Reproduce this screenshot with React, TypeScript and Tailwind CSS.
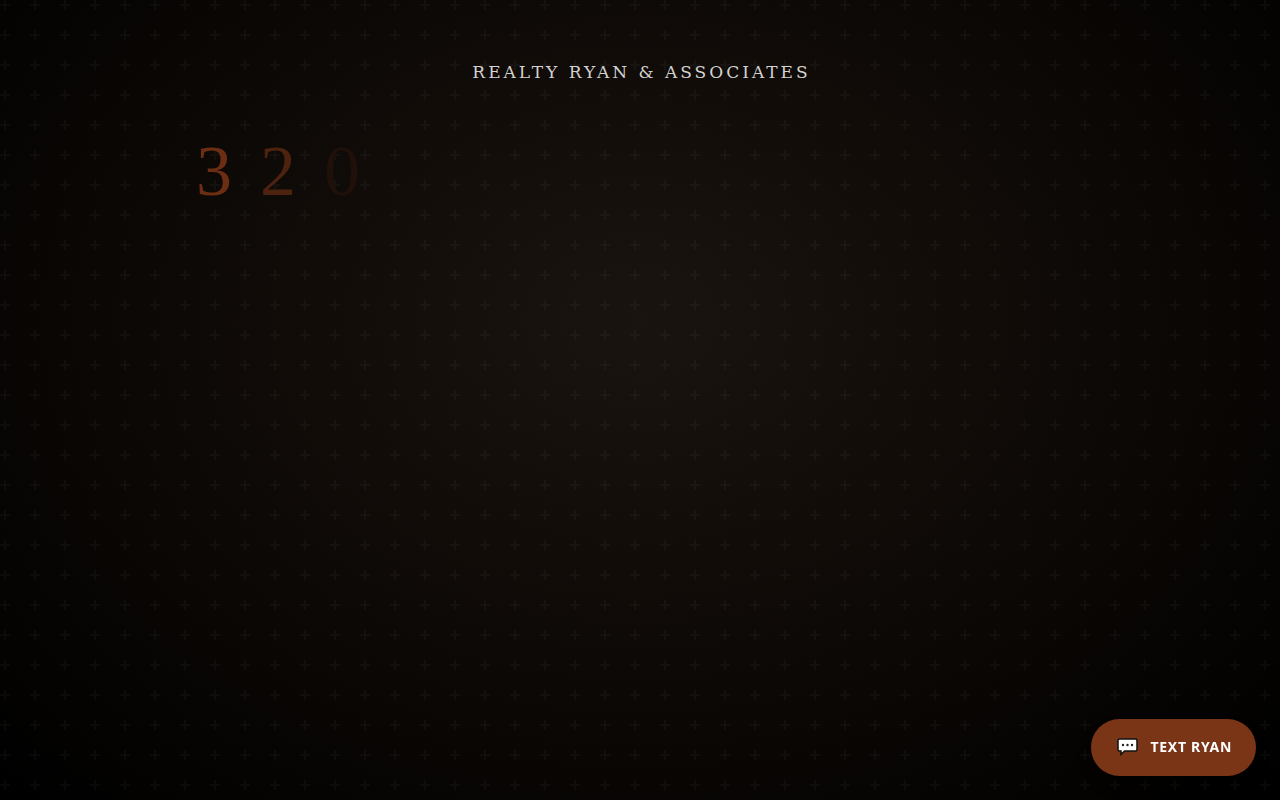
const digits = [
  { value: "3", className: "text-[#6c2e13]" },
  { value: "2", className: "text-[#4d220f]" },
  { value: "0", className: "text-[#1f100a]" },
];

function CrossPattern() {
  return (
    <svg className="pointer-events-none absolute inset-0 h-full w-full" aria-hidden="true">
      <defs>
        <pattern id="crosses" width="30" height="30" patternUnits="userSpaceOnUse">
          <path d="M6 4V0H4v4H0v2h4v4h2V6h4V4H6z" fill="#fff" fillOpacity="0.03" />
        </pattern>
      </defs>
      <rect width="100%" height="100%" fill="url(#crosses)" />
    </svg>
  );
}

function ChatIcon() {
  return (
    <svg width="24" height="24" viewBox="0 0 24 24" aria-hidden="true">
      <path
        d="M4.500 4h16a1.500 1.500 0 0 1 1.500 1.500v9a1.500 1.500 0 0 1-1.500 1.500H9.500L6 19.500v-3.500H4.500a1.500 1.500 0 0 1-1.500-1.500v-9A1.500 1.500 0 0 1 4.500 4z"
        fill="#fff"
        stroke="#111"
        strokeWidth="1.500"
      />
      <circle cx="8" cy="10" r="1.200" fill="#222" />
      <circle cx="12.500" cy="10" r="1.200" fill="#222" />
      <circle cx="17" cy="10" r="1.200" fill="#222" />
    </svg>
  );
}

export default function App() {
  return (
    <main className="relative min-h-screen overflow-hidden bg-[radial-gradient(ellipse_at_50%_40%,#1a1410_0%,#0d0906_50%,#000_100%)]">
      <CrossPattern />

      <div className="relative flex flex-col items-center px-6 pt-14">
        <h1 className="pl-[3px] text-center font-['DejaVu_Serif',serif] text-[17px] leading-8 tracking-[3px] text-[#d4d2cf]">
          REALTY RYAN &amp; ASSOCIATES
        </h1>

        <div className="mt-[43px] flex w-full max-w-[888px] gap-7 font-['Liberation_Serif',serif] text-7xl leading-20">
          {digits.map((d) => (
            <span key={d.value} className={d.className}>
              {d.value}
            </span>
          ))}
        </div>
      </div>

      <a
        href="sms:"
        className="fixed right-6 bottom-6 flex items-center gap-3 rounded-full bg-[#7a3416] px-6 pt-[15px] pb-[17px] font-['Noto_Sans',sans-serif] text-sm leading-[25px] font-bold tracking-wider text-white shadow-lg shadow-black/40"
      >
        <ChatIcon />
        TEXT RYAN
      </a>
    </main>
  );
}
